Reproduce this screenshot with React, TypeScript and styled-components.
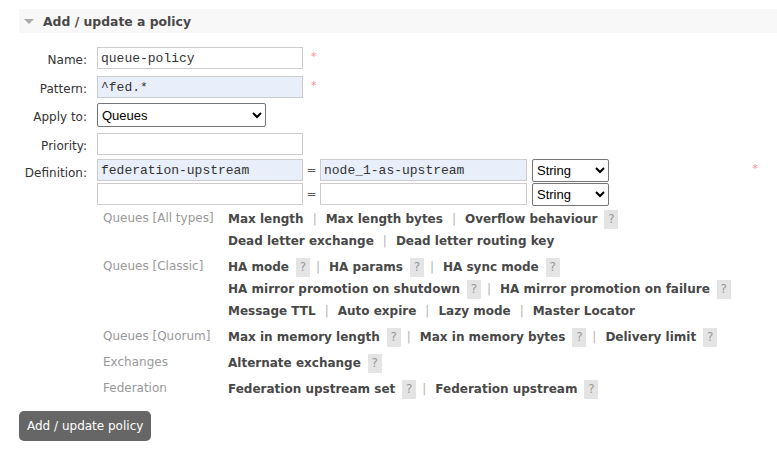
import React from "react";
import styled, { createGlobalStyle } from "styled-components";

const GlobalStyle = createGlobalStyle`
  body {
    margin: 0;
    background: #fff;
    font-family: "DejaVu Sans", Verdana, sans-serif;
    font-size: 12px;
    color: #484848;
  }
`;

const Page = styled.div`
  padding: 9px 0 0 19px;
  overflow: hidden;
  width: 758px;
`;

const SectionHeader = styled.div`
  display: flex;
  align-items: center;
  gap: 9px;
  height: 24px;
  padding-left: 5px;
  background: #f8f8f8;
`;

const Caret = styled.span`
  width: 0;
  height: 0;
  border-left: 5px solid transparent;
  border-right: 5px solid transparent;
  border-top: 5px solid #aaa;
  margin-top: 1px;
`;

const Title = styled.h2`
  margin: 0;
  font-size: 12.4px;
  font-weight: bold;
  color: #484848;
`;

const Form = styled.form`
  display: flex;
  flex-direction: column;
  padding-top: 14px;
`;

const FieldRow = styled.div<{ $space?: number }>`
  display: flex;
  align-items: flex-start;
  margin-top: ${(p) => p.$space ?? 0}px;
`;

const Label = styled.label<{ $top?: number }>`
  width: 68px;
  margin-right: 10px;
  text-align: right;
  padding-top: ${(p) => p.$top ?? 6}px;
  color: #333;
  flex-shrink: 0;
`;

const Fields = styled.div`
  display: flex;
  flex-direction: column;
  gap: 1px;
`;

const TextInput = styled.input<{ $filled?: boolean; $w?: number }>`
  box-sizing: border-box;
  width: ${(p) => p.$w ?? 206}px;
  height: 22px;
  padding: 0 3px;
  border: 1px solid #ccc;
  background: ${(p) => (p.$filled ? "#e8effb" : "#fff")};
  font-family: "Liberation Mono", "Courier New", monospace;
  font-size: 13px;
  color: #333;
  outline: none;
`;

const Select = styled.select<{ $w: number; $h?: number }>`
  box-sizing: border-box;
  width: ${(p) => p.$w}px;
  height: ${(p) => p.$h ?? 24}px;
  font-family: "Liberation Sans", Arial, sans-serif;
  font-size: 13px;
  color: #000;
  background: #fff;
  border: 1px solid #767676;
  border-radius: 2px;
`;

const Required = styled.span<{ $push?: boolean }>`
  color: #f88;
  font-size: 11px;
  line-height: 1;
  margin-left: ${(p) => (p.$push ? "auto" : "8px")};
  padding-top: 4px;
`;

const DefLine = styled.div`
  display: flex;
  align-items: flex-start;
  width: 661px;
  height: 23px;
`;

const Equals = styled.span`
  width: 17px;
  text-align: center;
  color: #555;
  line-height: 22px;
`;

const Gap = styled.span`
  width: 5px;
`;

const HelpTable = styled.div`
  display: flex;
  flex-direction: column;
  padding: 1px 0 0 6px;
`;

const HelpGroup = styled.div`
  display: flex;
  padding-bottom: 4px;
`;

const GroupLabel = styled.div`
  width: 125px;
  flex-shrink: 0;
  color: #999;
  line-height: 20px;
`;

const GroupLines = styled.div`
  display: flex;
  flex-direction: column;
`;

const Line = styled.div`
  display: flex;
  align-items: center;
  height: 22px;
  white-space: nowrap;
`;

const Key = styled.span`
  font-weight: bold;
  color: #484848;
`;

const HelpMark = styled.span`
  display: inline-flex;
  align-items: center;
  justify-content: center;
  width: 14px;
  height: 19px;
  margin-left: 7px;
  background: #e4e4e4;
  color: #999;
  font-size: 12px;
`;

const Sep = styled.span<{ $afterHelp?: boolean }>`
  color: #b4b4b4;
  margin: 0 9px 0 ${(p) => (p.$afterHelp ? 6 : 9)}px;
`;

const SubmitButton = styled.button`
  align-self: flex-start;
  margin-top: 7px;
  height: 30px;
  padding: 0 8px;
  border: none;
  border-radius: 5px;
  background: #666;
  color: #fff;
  font-family: "DejaVu Sans", Verdana, sans-serif;
  font-size: 12px;
`;

type Item = { text: string; help?: boolean };

const groups: { label: string; lines: Item[][] }[] = [
  {
    label: "Queues [All types]",
    lines: [
      [{ text: "Max length" }, { text: "Max length bytes" }, { text: "Overflow behaviour", help: true }],
      [{ text: "Dead letter exchange" }, { text: "Dead letter routing key" }],
    ],
  },
  {
    label: "Queues [Classic]",
    lines: [
      [
        { text: "HA mode", help: true },
        { text: "HA params", help: true },
        { text: "HA sync mode", help: true },
      ],
      [
        { text: "HA mirror promotion on shutdown", help: true },
        { text: "HA mirror promotion on failure", help: true },
      ],
      [{ text: "Message TTL" }, { text: "Auto expire" }, { text: "Lazy mode" }, { text: "Master Locator" }],
    ],
  },
  {
    label: "Queues [Quorum]",
    lines: [
      [
        { text: "Max in memory length", help: true },
        { text: "Max in memory bytes", help: true },
        { text: "Delivery limit", help: true },
      ],
    ],
  },
  { label: "Exchanges", lines: [[{ text: "Alternate exchange", help: true }]] },
  {
    label: "Federation",
    lines: [[{ text: "Federation upstream set", help: true }, { text: "Federation upstream", help: true }]],
  },
];

const HelpLine: React.FC<{ items: Item[] }> = ({ items }) => (
  <Line>
    {items.map((item, i) => (
      <React.Fragment key={item.text}>
        {i > 0 && <Sep $afterHelp={items[i - 1].help}>|</Sep>}
        <Key>{item.text}</Key>
        {item.help && <HelpMark>?</HelpMark>}
      </React.Fragment>
    ))}
  </Line>
);

const TypeSelect: React.FC = () => (
  <Select $w={77} $h={23} defaultValue="string">
    <option value="string">String</option>
    <option value="number">Number</option>
    <option value="boolean">Boolean</option>
    <option value="list">List</option>
  </Select>
);

const App: React.FC = () => {
  return (
    <>
      <GlobalStyle />
      <Page>
        <SectionHeader>
          <Caret />
          <Title>Add / update a policy</Title>
        </SectionHeader>
        <Form onSubmit={(e) => e.preventDefault()}>
          <FieldRow>
            <Label>Name:</Label>
            <TextInput defaultValue="queue-policy" />
            <Required>*</Required>
          </FieldRow>
          <FieldRow $space={7}>
            <Label>Pattern:</Label>
            <TextInput $filled defaultValue="^fed.*" />
            <Required>*</Required>
          </FieldRow>
          <FieldRow $space={5}>
            <Label $top={7}>Apply to:</Label>
            <Select $w={169} defaultValue="queues">
              <option value="both">Exchanges and queues</option>
              <option value="exchanges">Exchanges</option>
              <option value="queues">Queues</option>
            </Select>
          </FieldRow>
          <FieldRow $space={6}>
            <Label>Priority:</Label>
            <TextInput />
          </FieldRow>
          <FieldRow $space={4}>
            <Label $top={7}>Definition:</Label>
            <Fields>
              <DefLine>
                <TextInput $filled defaultValue="federation-upstream" />
                <Equals>=</Equals>
                <TextInput $filled $w={207} defaultValue="node_1-as-upstream" />
                <Gap />
                <TypeSelect />
                <Required $push>*</Required>
              </DefLine>
              <DefLine>
                <TextInput />
                <Equals>=</Equals>
                <TextInput $w={207} />
                <Gap />
                <TypeSelect />
              </DefLine>
              <HelpTable>
                {groups.map((g) => (
                  <HelpGroup key={g.label}>
                    <GroupLabel>{g.label}</GroupLabel>
                    <GroupLines>
                      {g.lines.map((items, i) => (
                        <HelpLine key={i} items={items} />
                      ))}
                    </GroupLines>
                  </HelpGroup>
                ))}
              </HelpTable>
            </Fields>
          </FieldRow>
          <SubmitButton type="submit">Add / update policy</SubmitButton>
        </Form>
      </Page>
    </>
  );
};

export default App;
